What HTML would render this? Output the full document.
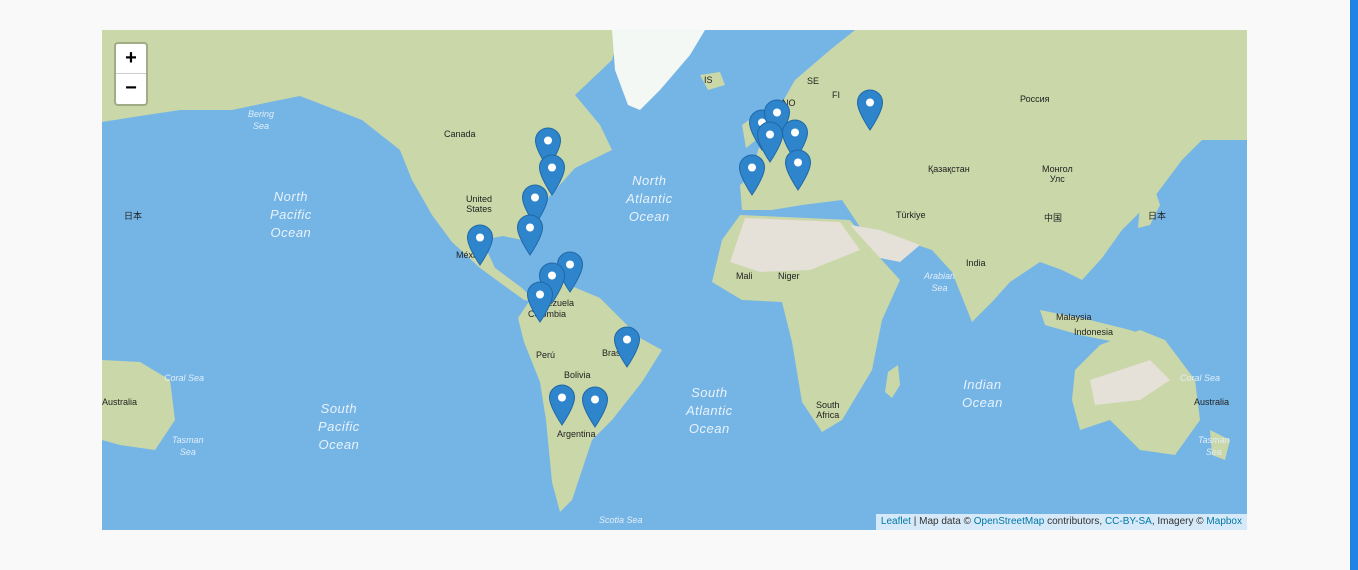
<!DOCTYPE html>
<html><head><meta charset="utf-8"><style>
html,body{margin:0;padding:0;width:1358px;height:570px;background:#f9f9f9;overflow:hidden;font-family:"Liberation Sans","Noto Sans CJK SC",sans-serif}
#bar{position:absolute;left:1350px;top:0;width:8px;height:570px;background:#2183e3}
#map{position:absolute;left:102px;top:30px;width:1145px;height:500px;background:#75b5e6;overflow:hidden}
#map svg{position:absolute;left:0;top:0}
.zoom{position:absolute;left:12px;top:12px;width:30px;height:60px;background:#fff;border:2px solid rgba(0,0,0,.2);border-radius:4px;background-clip:padding-box}
.zoom div{height:29px;text-align:center;font:bold 20px/29px "Liberation Sans",sans-serif;color:#000}
.zoom div:first-child{border-bottom:1px solid #ccc}
.attr{position:absolute;right:0;bottom:0;background:rgba(255,255,255,.7);font-size:10px;padding:1px 5px;color:#333;line-height:14px}
.attr span{color:#0078a8}
.oc{position:absolute;color:#e8f2fa;font-style:italic;font-size:13px;text-align:center;line-height:18px;letter-spacing:.5px}
.sm{position:absolute;color:#e0eef8;font-style:italic;font-size:9px;text-align:center;line-height:12px}
.lb{position:absolute;color:#222;font-size:9px;line-height:10px;text-align:center}
</style></head><body>
<div id="bar"></div>
<div id="map">
<svg width="1145" height="500" viewBox="102 30 1145 500">
<g fill="#cad7a8">
<polygon points="102,30 620,30 612,60 575,95 600,125 612,150 575,168 548,198 532,215 522,240 503,236 482,240 495,268 522,288 536,302 524,300 480,268 452,242 432,215 412,180 400,150 362,120 300,96 270,102 232,110 180,110 140,116 102,122"/>
<polygon points="530,300 562,282 600,298 640,338 662,350 642,382 612,420 592,440 582,470 572,500 560,512 552,482 546,420 540,382 524,342 518,318"/>
<polygon points="855,30 1247,30 1247,140 1202,140 1182,160 1152,200 1122,230 1102,258 1082,280 1062,270 1040,262 1010,282 992,302 972,322 952,272 932,250 902,240 882,258 862,230 842,200 802,205 772,210 742,210 740,185 752,175 758,150 770,130 778,110 795,80 830,50"/>
<polygon points="740,215 850,220 880,258 900,280 882,320 872,370 842,420 822,432 802,402 792,342 782,302 742,300 712,282 722,240"/>
<polygon points="1075,370 1100,345 1140,330 1165,340 1195,380 1200,420 1175,455 1140,450 1110,420 1080,430 1072,400"/>
<polygon points="102,360 140,362 170,380 175,420 155,450 120,445 102,440"/>
<polygon points="888,372 898,365 900,385 892,398 885,392"/>
<polygon points="1040,310 1090,320 1130,330 1160,340 1130,345 1080,335 1045,325"/>
<polygon points="1140,205 1155,190 1160,205 1150,225 1138,228"/>
<polygon points="1210,430 1230,440 1225,460 1212,455"/>
<polygon points="742,125 752,118 756,140 746,148"/>
<polygon points="700,75 720,72 725,85 708,90"/>
</g>
<polygon fill="#f3f8f4" points="612,30 705,30 690,55 660,90 640,110 628,105 615,70"/>
<g fill="#e5e0d8">
<polygon points="745,218 840,222 860,250 810,270 760,272 730,262"/>
<polygon points="850,225 880,258 900,262 920,245 880,230"/>
<polygon points="1090,380 1150,360 1170,380 1140,400 1095,405"/>
</g>
</svg>
<div class="oc" style="left:168px;top:158px">North<br>Pacific<br>Ocean</div>
<div class="oc" style="left:524px;top:142px">North<br>Atlantic<br>Ocean</div>
<div class="oc" style="left:216px;top:370px">South<br>Pacific<br>Ocean</div>
<div class="oc" style="left:584px;top:354px">South<br>Atlantic<br>Ocean</div>
<div class="oc" style="left:860px;top:346px">Indian<br>Ocean</div>
<div class="sm" style="left:146px;top:78px">Bering<br>Sea</div>
<div class="sm" style="left:62px;top:342px">Coral Sea</div>
<div class="sm" style="left:1078px;top:342px">Coral Sea</div>
<div class="sm" style="left:70px;top:404px">Tasman<br>Sea</div>
<div class="sm" style="left:1096px;top:404px">Tasman<br>Sea</div>
<div class="sm" style="left:822px;top:240px">Arabian<br>Sea</div>
<div class="sm" style="left:497px;top:484px">Scotia Sea</div>
<div class="lb" style="left:342px;top:99px">Canada</div>
<div class="lb" style="left:364px;top:164px">United<br>States</div>
<div class="lb" style="left:354px;top:220px">México</div>
<div class="lb" style="left:430px;top:268px">Venezuela</div>
<div class="lb" style="left:426px;top:279px">Colombia</div>
<div class="lb" style="left:434px;top:320px">Perú</div>
<div class="lb" style="left:462px;top:340px">Bolivia</div>
<div class="lb" style="left:500px;top:318px">Brasil</div>
<div class="lb" style="left:455px;top:399px">Argentina</div>
<div class="lb" style="left:918px;top:64px">Россия</div>
<div class="lb" style="left:826px;top:134px">Қазақстан</div>
<div class="lb" style="left:940px;top:134px">Монгол<br>Улс</div>
<div class="lb" style="left:864px;top:228px">India</div>
<div class="lb" style="left:794px;top:180px">Türkiye</div>
<div class="lb" style="left:634px;top:241px">Mali</div>
<div class="lb" style="left:676px;top:241px">Niger</div>
<div class="lb" style="left:954px;top:282px">Malaysia</div>
<div class="lb" style="left:972px;top:297px">Indonesia</div>
<div class="lb" style="left:0px;top:367px">Australia</div>
<div class="lb" style="left:1092px;top:367px">Australia</div>
<div class="lb" style="left:714px;top:370px">South<br>Africa</div>
<div class="lb" style="left:22px;top:181px">日本</div>
<div class="lb" style="left:1046px;top:181px">日本</div>
<div class="lb" style="left:942px;top:183px">中国</div>
<div class="lb" style="left:602px;top:45px">IS</div>
<div class="lb" style="left:680px;top:68px">NO</div>
<div class="lb" style="left:705px;top:46px">SE</div>
<div class="lb" style="left:730px;top:60px">FI</div>
<svg width="1145" height="500" style="left:0;top:0">
<defs><g id="m"><path d="M12.5 0C5.6 0 0 5.6 0 12.5 0 22 12.5 40 12.5 40S25 22 25 12.5C25 5.6 19.4 0 12.5 0Z" fill="#2e85cc" stroke="#2068a6" stroke-width="1"/><circle cx="12.5" cy="12.5" r="4" fill="#fff"/></g></defs>
<g transform="translate(-114.5,-70)">
<use href="#m" x="548" y="168"/><use href="#m" x="552" y="195"/><use href="#m" x="535" y="225"/><use href="#m" x="530" y="255"/><use href="#m" x="480" y="265"/><use href="#m" x="570" y="292"/><use href="#m" x="552" y="303"/><use href="#m" x="540" y="322"/><use href="#m" x="627" y="367"/><use href="#m" x="562" y="425"/><use href="#m" x="595" y="427"/><use href="#m" x="762" y="150"/><use href="#m" x="777" y="140"/><use href="#m" x="770" y="162"/><use href="#m" x="795" y="160"/><use href="#m" x="752" y="195"/><use href="#m" x="798" y="190"/><use href="#m" x="870" y="130"/>
</g></svg>
<div class="zoom"><div>+</div><div>−</div></div>
<div class="attr"><span>Leaflet</span> | Map data © <span>OpenStreetMap</span> contributors, <span>CC-BY-SA</span>, Imagery © <span>Mapbox</span></div>
</div>
</body></html>
